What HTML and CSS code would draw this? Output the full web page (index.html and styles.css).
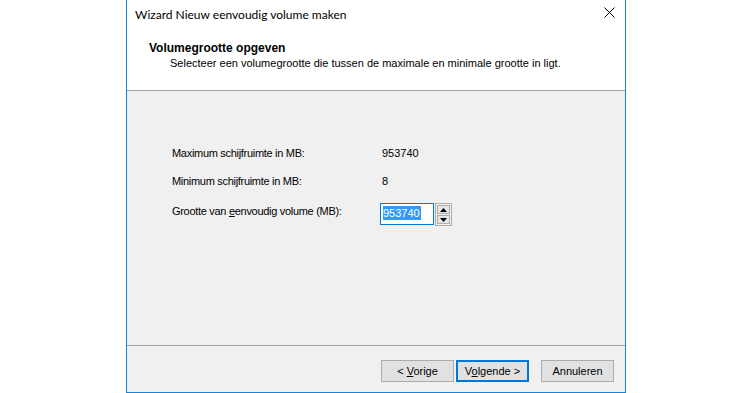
FILE: index.html
```html
<!DOCTYPE html>
<html lang="nl">
<head>
<meta charset="utf-8">
<title>Wizard Nieuw eenvoudig volume maken</title>
<link rel="stylesheet" href="styles.css">
</head>
<body>
<div class="window">
  <div class="titlebar">
    <span class="title">Wizard Nieuw eenvoudig volume maken</span>
    <svg class="close" width="11" height="11" viewBox="0 0 11 11"><path d="M0.5 0.5 L10.5 10.5 M10.5 0.5 L0.5 10.5" stroke="#000" stroke-width="1" fill="none"/></svg>
  </div>
  <div class="header">
    <div class="h-title">Volumegrootte opgeven</div>
    <div class="h-sub">Selecteer een volumegrootte die tussen de maximale en minimale grootte in ligt.</div>
  </div>
  <div class="content">
    <div class="row">
      <span class="label">Maximum schijfruimte in MB:</span>
      <span class="value">953740</span>
    </div>
    <div class="row">
      <span class="label">Minimum schijfruimte in MB:</span>
      <span class="value">8</span>
    </div>
    <div class="row row-input">
      <span class="label label-input">Grootte van <u>e</u>envoudig volume (MB):</span>
      <div class="field">
        <div class="input"><span class="sel">953740</span></div>
        <div class="spin">
          <div class="spin-btn"><svg width="7" height="4" viewBox="0 0 7 4"><path d="M3.5 0 L7 4 L0 4 Z" fill="#000"/></svg></div>
          <div class="spin-btn"><svg width="7" height="4" viewBox="0 0 7 4"><path d="M0 0 L7 0 L3.5 4 Z" fill="#000"/></svg></div>
        </div>
      </div>
    </div>
  </div>
  <div class="footer">
    <button class="btn">&lt; <u>V</u>orige</button>
    <button class="btn btn-default">V<u>o</u>lgende &gt;</button>
    <button class="btn btn-cancel">Annuleren</button>
  </div>
</div>
</body>
</html>
```

FILE: styles.css
```css
html, body {
  margin: 0;
  padding: 0;
  background: #ffffff;
}

body {
  width: 752px;
  height: 393px;
  overflow: hidden;
  font-family: "Liberation Sans", Arial, sans-serif;
  font-size: 11px;
  color: #000;
}

.window {
  margin-left: 126px;
  width: 498px;
  height: 392px;
  border: 1px solid #1883d7;
  border-top: none;
  display: flex;
  flex-direction: column;
  background: #ffffff;
}

.titlebar {
  height: 31px;
  flex: none;
  display: flex;
  align-items: center;
  justify-content: space-between;
  padding: 0 10px 0 8px;
}

.title {
  font-family: Lato, "Noto Sans", sans-serif;
  font-size: 12px;
  color: #000;
  position: relative;
  top: -1px;
}

.close {
  display: block;
  margin-top: -7px;
}

.header {
  height: 48px;
  flex: none;
  padding: 11px 0 0 22px;
  border-bottom: 1px solid #a0a0a0;
}

.h-title {
  font-weight: bold;
  font-size: 12px;
  line-height: 13px;
}

.h-sub {
  line-height: 13px;
  margin-top: 2px;
  padding-left: 21px;
}

.content {
  flex: none;
  background: #f0f0f0;
  border-bottom: 1px solid #a0a0a0;
  padding: 56px 0 0 45px;
  box-sizing: border-box;
  height: 255px;
  display: flex;
  flex-direction: column;
  gap: 15px;
}

.row {
  display: flex;
  line-height: 13px;
}

.label {
  width: 208px;
  flex: none;
  letter-spacing: -0.3px;
}

.label-input {
  margin-top: 2px;
}

.value {
  padding-left: 2px;
}

.field {
  display: flex;
  gap: 1px;
}

.input {
  border: 1px solid #0078d7;
  background: #ffffff;
  padding: 2px 0 0 2px;
  box-sizing: border-box;
  width: 54px;
  height: 22px;
}

.sel {
  display: inline-block;
  background: #3399ff;
  color: #ffffff;
  line-height: 14px;
  padding: 0 1px 0 0;
}

.spin {
  width: 17px;
  height: 23px;
  box-sizing: border-box;
  border: 1px solid #adadad;
  background: #f0f0f0;
  display: flex;
  flex-direction: column;
  gap: 1px;
  padding: 1px;
}

.spin-btn {
  flex: 1;
  border: 1px solid #adadad;
  background: #e5e5e5;
  display: flex;
  align-items: center;
  justify-content: center;
}

.spin-btn svg {
  display: block;
}

.footer {
  flex: 1;
  background: #f0f0f0;
  display: flex;
  justify-content: flex-end;
  align-items: flex-start;
  padding: 14px 11px 0 0;
  gap: 2px;
}

.btn {
  width: 73px;
  height: 22px;
  box-sizing: border-box;
  border: 1px solid #adadad;
  background: #e1e1e1;
  font-family: "Liberation Sans", Arial, sans-serif;
  font-size: 11px;
  color: #000;
  padding: 0;
  margin: 0;
}

.btn-default {
  border: 2px solid #0078d7;
}

.btn-cancel {
  margin-left: 10px;
}
```
